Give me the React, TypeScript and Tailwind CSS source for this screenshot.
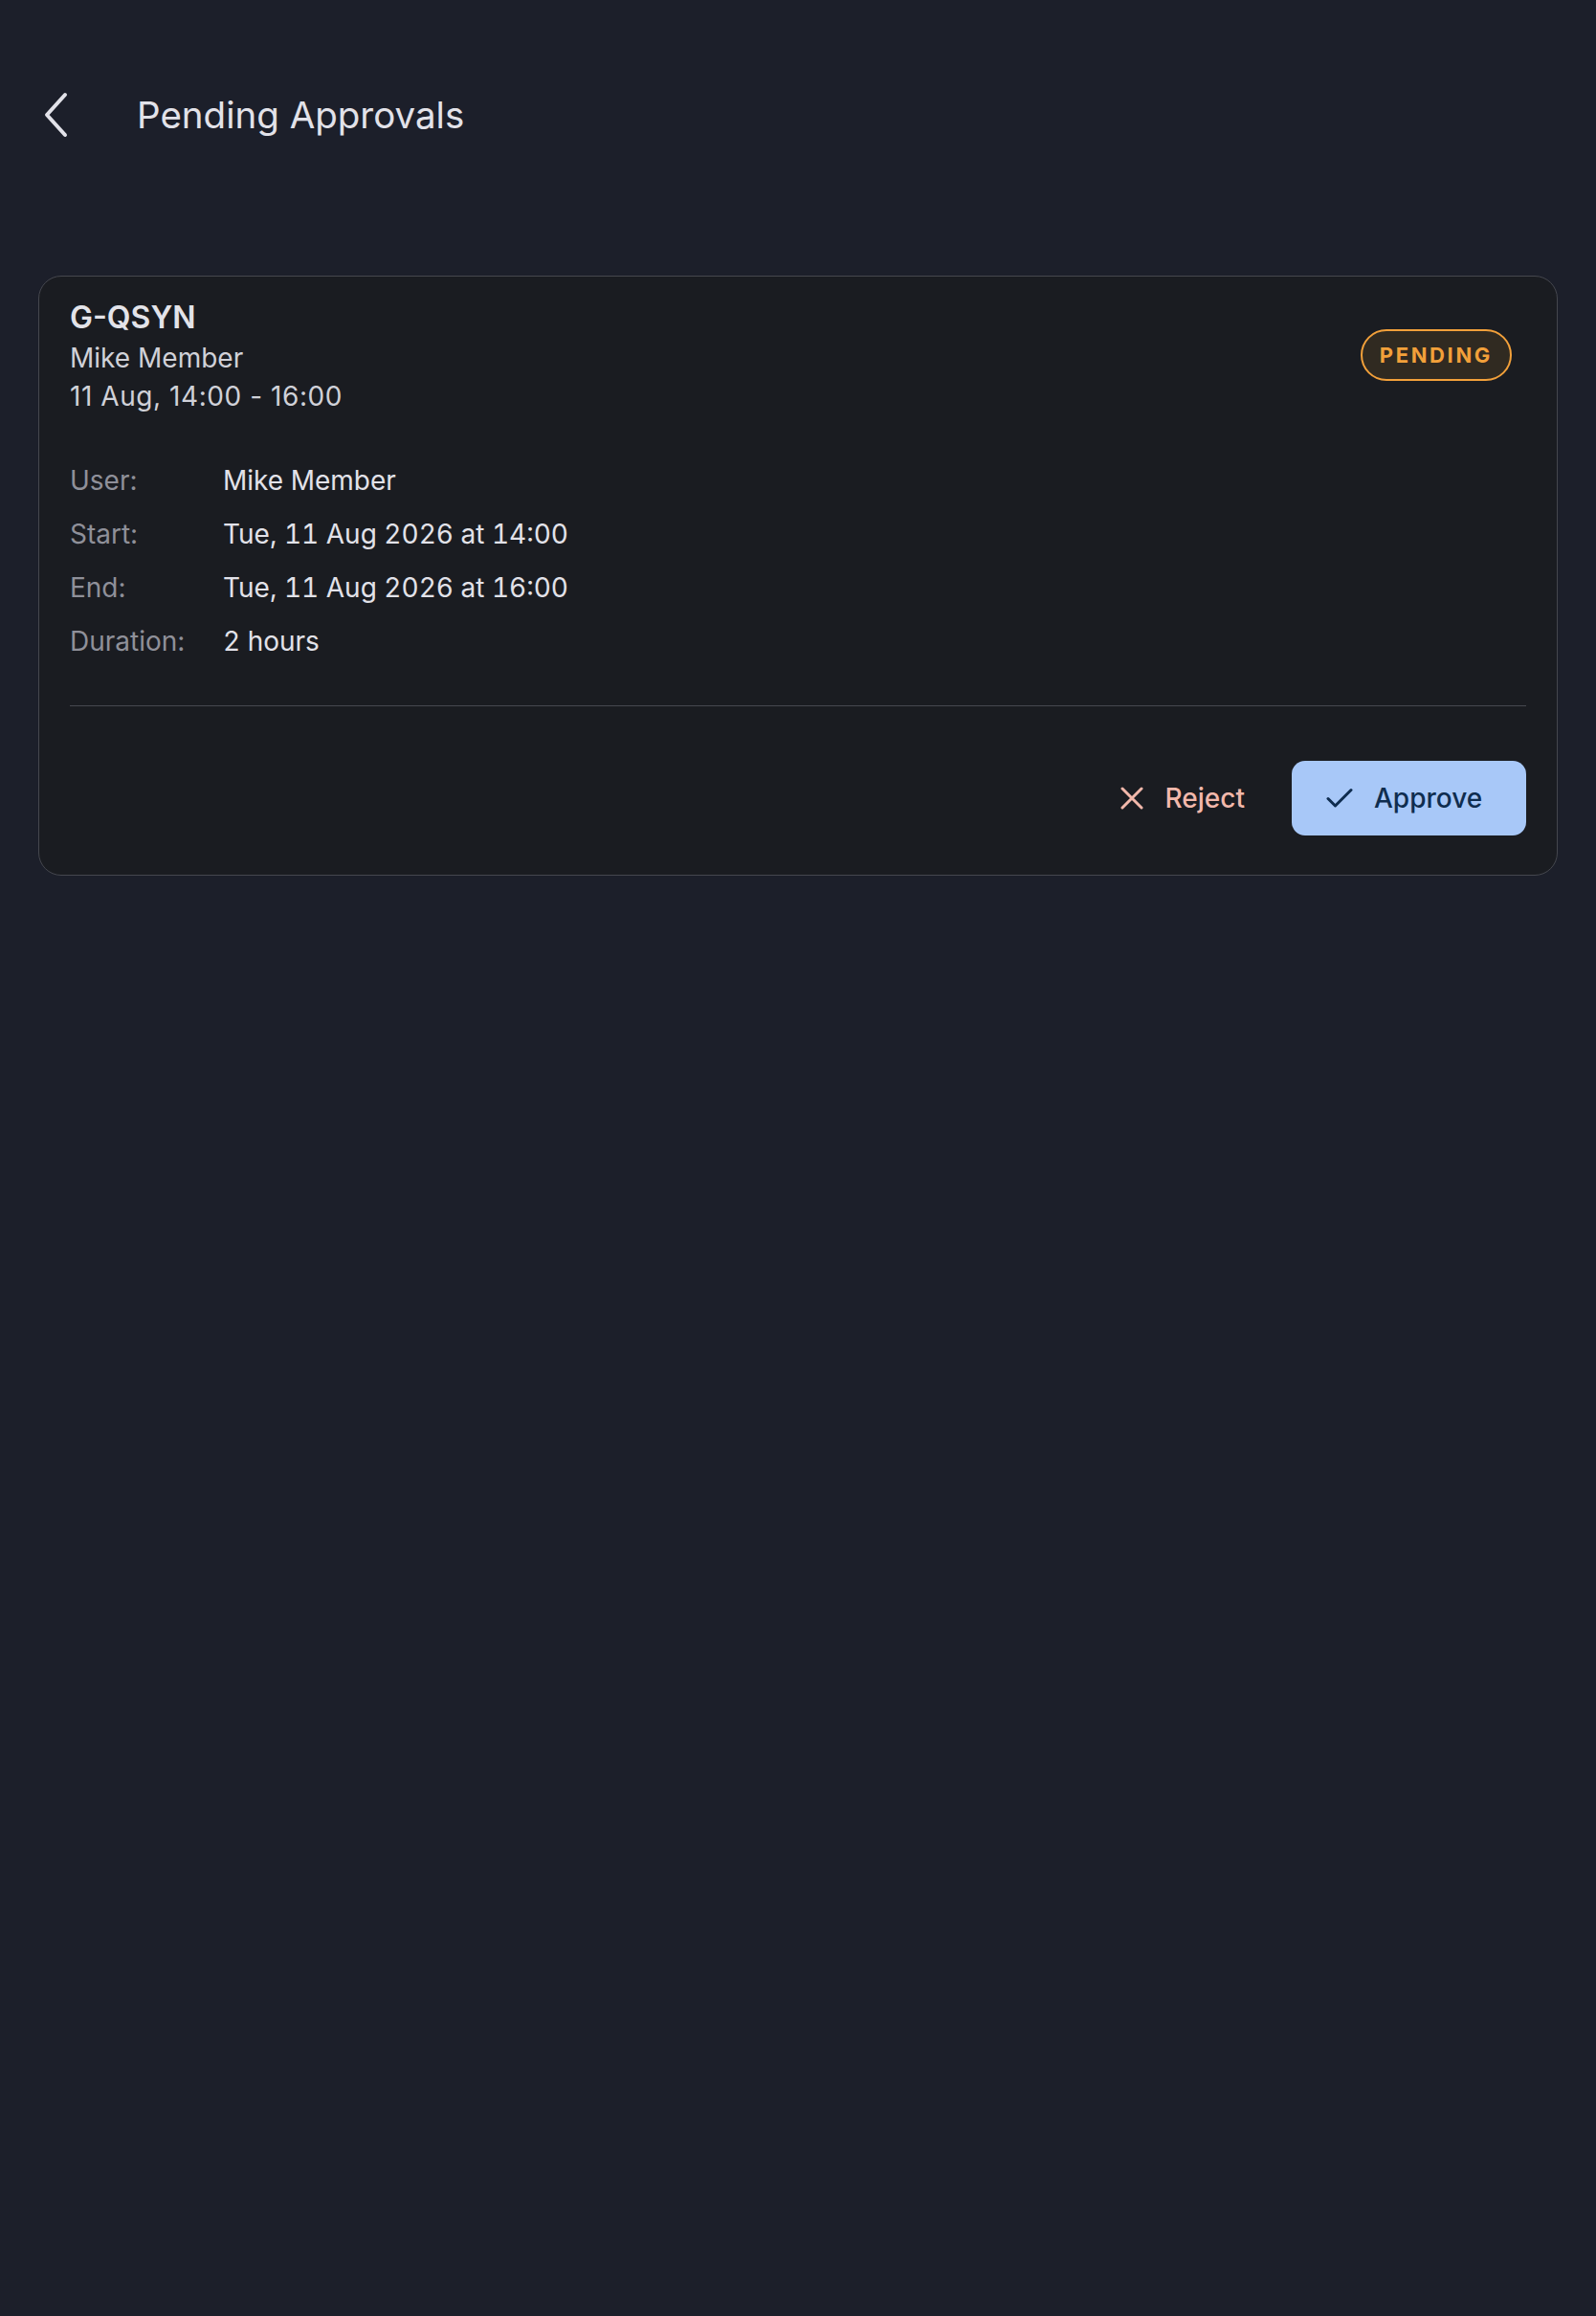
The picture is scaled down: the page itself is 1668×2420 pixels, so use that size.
import React from "react";

const rows = [
  { label: "User:", value: "Mike Member" },
  { label: "Start:", value: "Tue, 11 Aug 2026 at 14:00" },
  { label: "End:", value: "Tue, 11 Aug 2026 at 16:00" },
  { label: "Duration:", value: "2 hours" },
];

export default function App() {
  return (
    <main className="min-h-screen bg-[#1c1f2a] font-['Inter',sans-serif] text-[#e2e2e9]">
      {/* Top bar */}
      <header className="flex items-center h-[112px] pt-[64px] box-content pl-[40px]">
        <button className="w-[36px] h-[56px] flex items-center justify-center">
          <svg width="28" height="48" viewBox="0 0 28 48" fill="none">
            <path
              d="M24 3 L5 24 L24 45"
              stroke="#e2e2e9"
              strokeWidth="4"
              strokeLinecap="round"
              strokeLinejoin="round"
            />
          </svg>
        </button>
        <h1 className="ml-[67px] text-[38.5px] font-normal leading-[48px] text-[#e2e2e9]">
          Pending Approvals
        </h1>
      </header>

      {/* Card */}
      <section className="mx-[40px] mt-[112px] rounded-[24px] border border-[#45474e] bg-[#1a1c21] px-[32px] pt-[21px] pb-[41px]">
        <div className="flex items-center justify-between">
          <div>
            <div className="text-[32px] leading-[44px] font-semibold text-[#e3e3e9]">G-QSYN</div>
            <div className="text-[28px] leading-[40px] text-[#d0d1d8]">Mike Member</div>
            <div className="text-[28px] leading-[40px] text-[#d0d1d8] tracking-[0.02em]">11 Aug, 14:00 - 16:00</div>
          </div>
          <span className="mr-[15px] mb-[2px] h-[54px] px-[18px] flex items-center rounded-full border-2 border-[#f2a03a] bg-[#302a21] text-[22px] font-bold tracking-[0.12em] text-[#f2a03a]">
            PENDING
          </span>
        </div>

        <div className="mt-[40px]">
          {rows.map((r) => (
            <div key={r.label} className="flex items-center h-[56px] text-[28px]">
              <span className="w-[160px] text-[#8f9099]">{r.label}</span>
              <span className="text-[#e2e2e9] tabular-nums">{r.value}</span>
            </div>
          ))}
        </div>

        <div className="mt-[39px] h-px bg-[#46484f]" />

        <div className="mt-[57px] flex items-center justify-end">
          <button className="flex items-center gap-[23px] text-[28px] font-medium text-[#f2b8ab]">
            <svg width="24" height="24" viewBox="0 0 24 24" fill="none">
              <path d="M2 2 L22 22 M22 2 L2 22" stroke="#f2b8ab" strokeWidth="3" strokeLinecap="round" />
            </svg>
            Reject
          </button>
          <button className="ml-[49px] h-[78px] w-[245px] flex items-center pl-[36px] gap-[22px] rounded-[14px] bg-[#a8c8f8] text-[28px] font-medium text-[#0f2d4f]">
            <svg width="28" height="22" viewBox="0 0 28 22" fill="none">
              <path d="M2 11.5 L9.5 19 L26 2.5" stroke="#0f2d4f" strokeWidth="3" strokeLinecap="round" strokeLinejoin="round" />
            </svg>
            Approve
          </button>
        </div>
      </section>
    </main>
  );
}
